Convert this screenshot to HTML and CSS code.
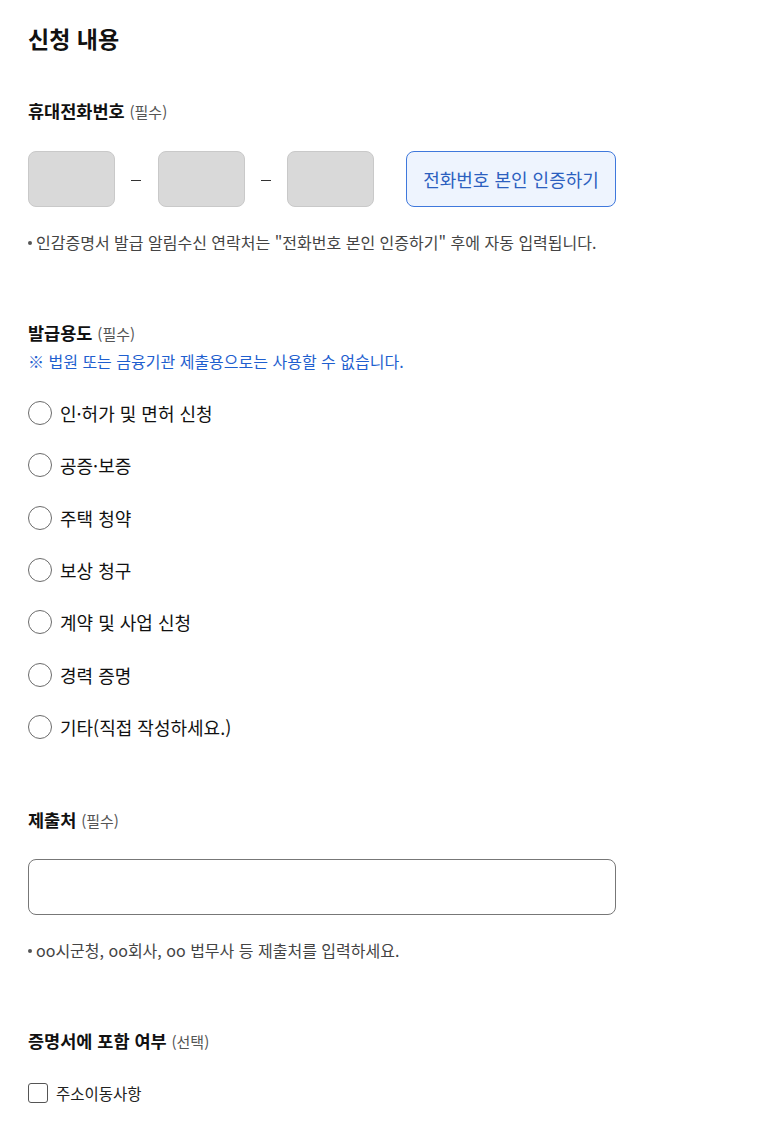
FILE: index.html
```html
<!DOCTYPE html>
<html lang="ko">
<head>
<meta charset="utf-8">
<title>신청 내용</title>
<link rel="stylesheet" href="styles.css">
</head>
<body>
<main class="page">
  <h1 class="title">신청 내용</h1>

  <section class="sec sec-phone">
    <h2 class="label">휴대전화번호 <span class="req">(필수)</span></h2>
    <div class="phone-row">
      <div class="phone-box"></div>
      <span class="dash"></span>
      <div class="phone-box"></div>
      <span class="dash"></span>
      <div class="phone-box"></div>
      <button class="auth-btn" type="button">전화번호 본인 인증하기</button>
    </div>
    <p class="note">인감증명서 발급 알림수신 연락처는 "전화번호 본인 인증하기" 후에 자동 입력됩니다.</p>
  </section>

  <section class="sec sec-purpose">
    <h2 class="label">발급용도 <span class="req">(필수)</span></h2>
    <p class="warn">※ 법원 또는 금융기관 제출용으로는 사용할 수 없습니다.</p>
    <ul class="radio-list">
      <li class="radio-item"><span class="radio"></span><span class="radio-text">인·허가 및 면허 신청</span></li>
      <li class="radio-item"><span class="radio"></span><span class="radio-text">공증·보증</span></li>
      <li class="radio-item"><span class="radio"></span><span class="radio-text">주택 청약</span></li>
      <li class="radio-item"><span class="radio"></span><span class="radio-text">보상 청구</span></li>
      <li class="radio-item"><span class="radio"></span><span class="radio-text">계약 및 사업 신청</span></li>
      <li class="radio-item"><span class="radio"></span><span class="radio-text">경력 증명</span></li>
      <li class="radio-item"><span class="radio"></span><span class="radio-text">기타(직접 작성하세요.)</span></li>
    </ul>
  </section>

  <section class="sec sec-submit">
    <h2 class="label">제출처 <span class="req">(필수)</span></h2>
    <div class="text-input"></div>
    <p class="note">oo시군청, oo회사, oo 법무사 등 제출처를 입력하세요.</p>
  </section>

  <section class="sec sec-include">
    <h2 class="label">증명서에 포함 여부 <span class="req">(선택)</span></h2>
    <div class="check-item"><span class="checkbox"></span><span class="check-text">주소이동사항</span></div>
  </section>
</main>
</body>
</html>
```

FILE: styles.css
```css
* { box-sizing: border-box; }
html, body { margin: 0; padding: 0; background: #fff; }
body {
  font-family: "Noto Sans CJK KR", "Noto Sans", sans-serif;
  color: #111;
}
.page { padding: 0 28px; }

.title {
  margin: 22px 0 0;
  font-size: 23px;
  line-height: 32px;
  font-weight: 700;
  color: #111;
}

.sec { margin: 0; }
.sec-phone { margin-top: 45px; }
.sec-purpose { margin-top: 68px; }
.sec-submit { margin-top: 69px; }
.sec-include { margin-top: 68px; }

.label {
  margin: 0;
  font-size: 17.5px;
  line-height: 24px;
  font-weight: 700;
  color: #111;
}
.req {
  font-size: 15px;
  font-weight: 400;
  color: #555;
}

.phone-row {
  margin-top: 27px;
  display: flex;
  align-items: center;
  height: 56px;
}
.phone-box {
  width: 87px;
  height: 56px;
  background: #d9d9d9;
  border: 1px solid #c9c9c9;
  border-radius: 8px;
}
.dash {
  width: 42.5px;
  display: flex;
  justify-content: center;
}
.dash::before {
  content: "";
  display: block;
  width: 10px;
  height: 1px;
  background: #333;
  margin-top: 2px;
}
.auth-btn {
  margin-left: 32px;
  width: 210px;
  height: 56px;
  border: 1px solid #3f78dc;
  border-radius: 8px;
  background: #eef4fe;
  color: #2c5fbf;
  font-family: inherit;
  font-size: 18px;
  padding: 0;
}

.note {
  position: relative;
  margin: 24px 0 0;
  padding-left: 8px;
  font-size: 16px;
  line-height: 22px;
  color: #444;
}
.note::before {
  content: "";
  position: absolute;
  left: 0;
  top: 10px;
  width: 4px;
  height: 4px;
  border-radius: 50%;
  background: #555;
}

.warn {
  margin: 4px 0 0;
  font-size: 16px;
  line-height: 22px;
  color: #1f5fcf;
}

.radio-list {
  list-style: none;
  margin: 29px 0 0;
  padding: 0;
  display: flex;
  flex-direction: column;
  gap: 28.33px;
}
.radio-item {
  display: flex;
  align-items: center;
  height: 24px;
}
.radio {
  width: 24px;
  height: 24px;
  border: 1.5px solid #6b6b6b;
  border-radius: 50%;
  flex: none;
}
.radio-text {
  margin-left: 8px;
  font-size: 18px;
  line-height: 24px;
  color: #111;
}

.text-input {
  margin-top: 26px;
  width: 588px;
  height: 56px;
  border: 1px solid #777;
  border-radius: 8px;
}

.check-item {
  margin-top: 27px;
  display: flex;
  align-items: center;
  height: 24px;
}
.checkbox {
  width: 20px;
  height: 20px;
  border: 1.5px solid #555;
  border-radius: 3px;
  flex: none;
}
.check-text {
  margin-left: 8px;
  font-size: 15.5px;
  color: #222;
}
```
